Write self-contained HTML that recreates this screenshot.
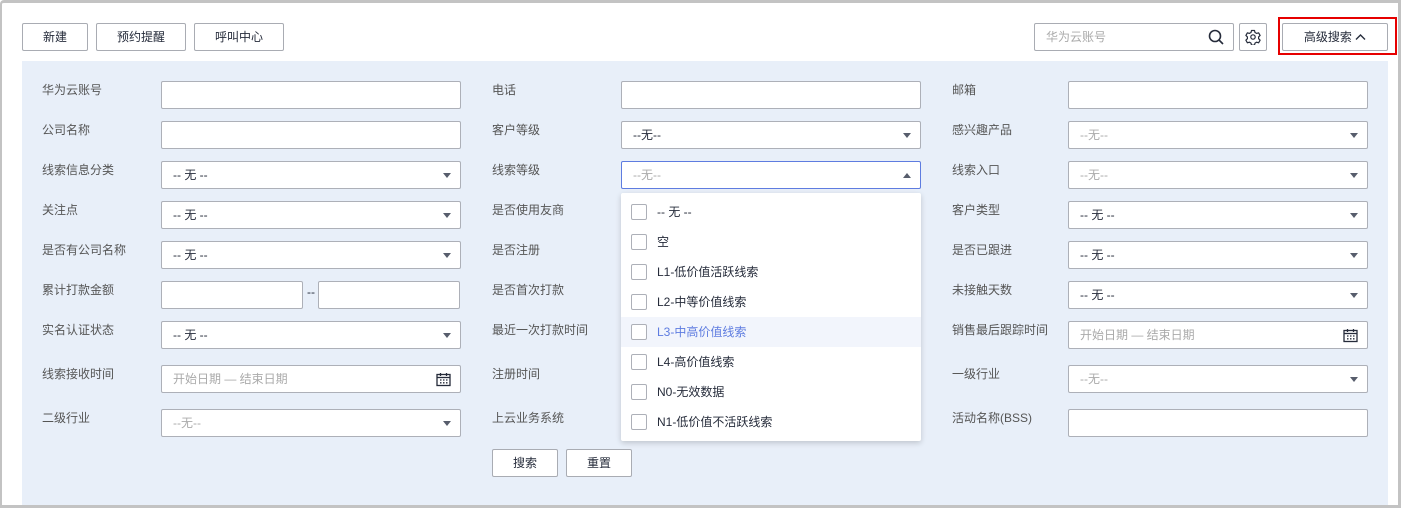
<!DOCTYPE html>
<html><head><meta charset="utf-8"><style>
*{box-sizing:border-box;margin:0;padding:0}
body{width:1401px;height:508px;overflow:hidden;background:#fff;font-family:"Liberation Sans","Noto Sans CJK SC",sans-serif;font-size:12px;color:#333;position:relative}
.frame{position:absolute;left:0;top:0;width:1401px;height:508px;border:2px solid #c3c3c3;border-top-width:3px;border-bottom-width:3px;border-right-width:3px;border-radius:4px 0 0 0}
.btn{position:absolute;top:23px;height:28px;border:1px solid #a9acb3;border-radius:2px;background:#fff;text-align:center;line-height:26px;font-size:12px;color:#252b3a}
.panel{position:absolute;left:22px;top:61px;width:1366px;height:444px;background:#e8eff9}
.lb{position:absolute;color:#555;font-size:12px}
.in{position:absolute;height:28px;background:#fff;border:1px solid #adb0b8;border-radius:2px;line-height:26px;padding-left:11px;font-size:12px;color:#252b3a}
.ph{color:#aaa}
.arr{position:absolute;right:9px;top:11px;width:0;height:0;border-left:4px solid transparent;border-right:4px solid transparent;border-top:5px solid #575d6c}
.cal{position:absolute;right:9px;top:6px}
.dd{position:absolute;left:621px;top:193px;width:300px;height:248px;background:#fff;border-radius:2px;box-shadow:0 2px 6px rgba(0,0,0,.18)}
.it{height:30px;position:relative;line-height:30px;padding-left:36px;font-size:12px;color:#252b3a}
.it i{position:absolute;left:10px;top:7px;width:16px;height:16px;border:1px solid #adb0b8;border-radius:2px;background:#fff}
.it.h{background:#f2f5fc;color:#5e7ce0}
</style></head><body>
<div class="frame"></div>
<div class="btn" style="left:22px;width:66px">新建</div>
<div class="btn" style="left:96px;width:90px">预约提醒</div>
<div class="btn" style="left:194px;width:90px">呼叫中心</div>
<div class="btn" style="left:1034px;width:200px;text-align:left;padding-left:11px;color:#aaa">华为云账号
<svg style="position:absolute;right:9px;top:5px" width="16" height="16" viewBox="0 0 16 16"><circle cx="7" cy="7" r="5.5" fill="none" stroke="#252b3a" stroke-width="1.6"/><line x1="11" y1="11" x2="15" y2="15" stroke="#252b3a" stroke-width="1.6"/></svg></div>
<div class="btn" style="left:1239px;width:28px">
<svg style="position:absolute;left:5px;top:5px" width="16" height="16" viewBox="0 0 16 16"><path d="M6.5 1.5h3l.5 2 1.6.9 2-.6 1.5 2.6-1.5 1.5v1.8l1.5 1.5-1.5 2.6-2-.6-1.6.9-.5 2h-3l-.5-2-1.6-.9-2 .6L.9 11.2l1.5-1.5V7.9L.9 6.4l1.5-2.6 2 .6 1.6-.9z" fill="none" stroke="#252b3a" stroke-width="1.2" stroke-linejoin="round"/><circle cx="8" cy="8" r="2.2" fill="none" stroke="#252b3a" stroke-width="1.2"/></svg></div>
<div style="position:absolute;left:1278px;top:17px;width:119px;height:38px;border:2px solid #e60000"></div>
<div class="btn" style="left:1282px;width:106px;">高级搜索 <svg width="11" height="8" viewBox="0 0 11 8" style="vertical-align:0px"><path d="M1 6.5L5.5 2 10 6.5" fill="none" stroke="#252b3a" stroke-width="1.4"/></svg></div>

<div class="panel"></div>
<!-- col1 -->
<div class="lb" style="left:42px;top:81px">华为云账号</div><div class="in" style="left:161px;top:81px;width:300px"></div>
<div class="lb" style="left:42px;top:121px">公司名称</div><div class="in" style="left:161px;top:121px;width:300px"></div>
<div class="lb" style="left:42px;top:161px">线索信息分类</div><div class="in" style="left:161px;top:161px;width:300px">-- 无 --<span class="arr"></span></div>
<div class="lb" style="left:42px;top:201px">关注点</div><div class="in" style="left:161px;top:201px;width:300px">-- 无 --<span class="arr"></span></div>
<div class="lb" style="left:42px;top:241px">是否有公司名称</div><div class="in" style="left:161px;top:241px;width:300px">-- 无 --<span class="arr"></span></div>
<div class="lb" style="left:42px;top:281px">累计打款金额</div><div class="in" style="left:161px;top:281px;width:142px"></div><div class="lb" style="left:307px;top:285px;color:#252b3a">--</div><div class="in" style="left:318px;top:281px;width:142px"></div>
<div class="lb" style="left:42px;top:321px">实名认证状态</div><div class="in" style="left:161px;top:321px;width:300px">-- 无 --<span class="arr"></span></div>
<div class="lb" style="left:42px;top:365px">线索接收时间</div><div class="in ph" style="left:161px;top:365px;width:300px">开始日期 — 结束日期<svg class="cal" width="15" height="15" viewBox="0 0 15 15"><rect x="1" y="2.5" width="13" height="11" fill="none" stroke="#252b3a" stroke-width="1.3"/><line x1="1" y1="5.5" x2="14" y2="5.5" stroke="#252b3a" stroke-width="1.3"/><line x1="4.5" y1="1" x2="4.5" y2="4" stroke="#252b3a" stroke-width="1.3"/><line x1="10.5" y1="1" x2="10.5" y2="4" stroke="#252b3a" stroke-width="1.3"/><path d="M4 8h1.5M7 8h1.5M10 8h1.5M4 10.8h1.5M7 10.8h1.5M10 10.8h1.5" stroke="#252b3a" stroke-width="1.3"/></svg></div>
<div class="lb" style="left:42px;top:409px">二级行业</div><div class="in ph" style="left:161px;top:409px;width:300px">--无--<span class="arr"></span></div>
<!-- col2 -->
<div class="lb" style="left:492px;top:81px">电话</div><div class="in" style="left:621px;top:81px;width:300px"></div>
<div class="lb" style="left:492px;top:121px">客户等级</div><div class="in" style="left:621px;top:121px;width:300px">--无--<span class="arr"></span></div>
<div class="lb" style="left:492px;top:161px">线索等级</div><div class="in ph" style="left:621px;top:161px;width:300px;border-color:#5e7ce0">--无--<span class="arr" style="border-top:0;border-bottom:5px solid #575d6c;top:11px"></span></div>
<div class="lb" style="left:492px;top:201px">是否使用友商</div>
<div class="lb" style="left:492px;top:241px">是否注册</div>
<div class="lb" style="left:492px;top:281px">是否首次打款</div>
<div class="lb" style="left:492px;top:321px">最近一次打款时间</div>
<div class="lb" style="left:492px;top:365px">注册时间</div>
<div class="lb" style="left:492px;top:409px">上云业务系统</div>
<div class="btn" style="left:492px;top:449px;width:66px">搜索</div>
<div class="btn" style="left:566px;top:449px;width:66px">重置</div>
<!-- col3 -->
<div class="lb" style="left:952px;top:81px">邮箱</div><div class="in" style="left:1068px;top:81px;width:300px"></div>
<div class="lb" style="left:952px;top:121px">感兴趣产品</div><div class="in ph" style="left:1068px;top:121px;width:300px">--无--<span class="arr"></span></div>
<div class="lb" style="left:952px;top:161px">线索入口</div><div class="in ph" style="left:1068px;top:161px;width:300px">--无--<span class="arr"></span></div>
<div class="lb" style="left:952px;top:201px">客户类型</div><div class="in" style="left:1068px;top:201px;width:300px">-- 无 --<span class="arr"></span></div>
<div class="lb" style="left:952px;top:241px">是否已跟进</div><div class="in" style="left:1068px;top:241px;width:300px">-- 无 --<span class="arr"></span></div>
<div class="lb" style="left:952px;top:281px">未接触天数</div><div class="in" style="left:1068px;top:281px;width:300px">-- 无 --<span class="arr"></span></div>
<div class="lb" style="left:952px;top:321px">销售最后跟踪时间</div><div class="in ph" style="left:1068px;top:321px;width:300px">开始日期 — 结束日期<svg class="cal" width="15" height="15" viewBox="0 0 15 15"><rect x="1" y="2.5" width="13" height="11" fill="none" stroke="#252b3a" stroke-width="1.3"/><line x1="1" y1="5.5" x2="14" y2="5.5" stroke="#252b3a" stroke-width="1.3"/><line x1="4.5" y1="1" x2="4.5" y2="4" stroke="#252b3a" stroke-width="1.3"/><line x1="10.5" y1="1" x2="10.5" y2="4" stroke="#252b3a" stroke-width="1.3"/><path d="M4 8h1.5M7 8h1.5M10 8h1.5M4 10.8h1.5M7 10.8h1.5M10 10.8h1.5" stroke="#252b3a" stroke-width="1.3"/></svg></div>
<div class="lb" style="left:952px;top:365px">一级行业</div><div class="in ph" style="left:1068px;top:365px;width:300px">--无--<span class="arr"></span></div>
<div class="lb" style="left:952px;top:409px">活动名称(BSS)</div><div class="in" style="left:1068px;top:409px;width:300px"></div>
<!-- dropdown -->
<div class="dd" style="padding-top:4px">
<div class="it"><i></i>-- 无 --</div>
<div class="it"><i></i>空</div>
<div class="it"><i></i>L1-低价值活跃线索</div>
<div class="it"><i></i>L2-中等价值线索</div>
<div class="it h"><i></i>L3-中高价值线索</div>
<div class="it"><i></i>L4-高价值线索</div>
<div class="it"><i></i>N0-无效数据</div>
<div class="it"><i></i>N1-低价值不活跃线索</div>
</div>
</body></html>
